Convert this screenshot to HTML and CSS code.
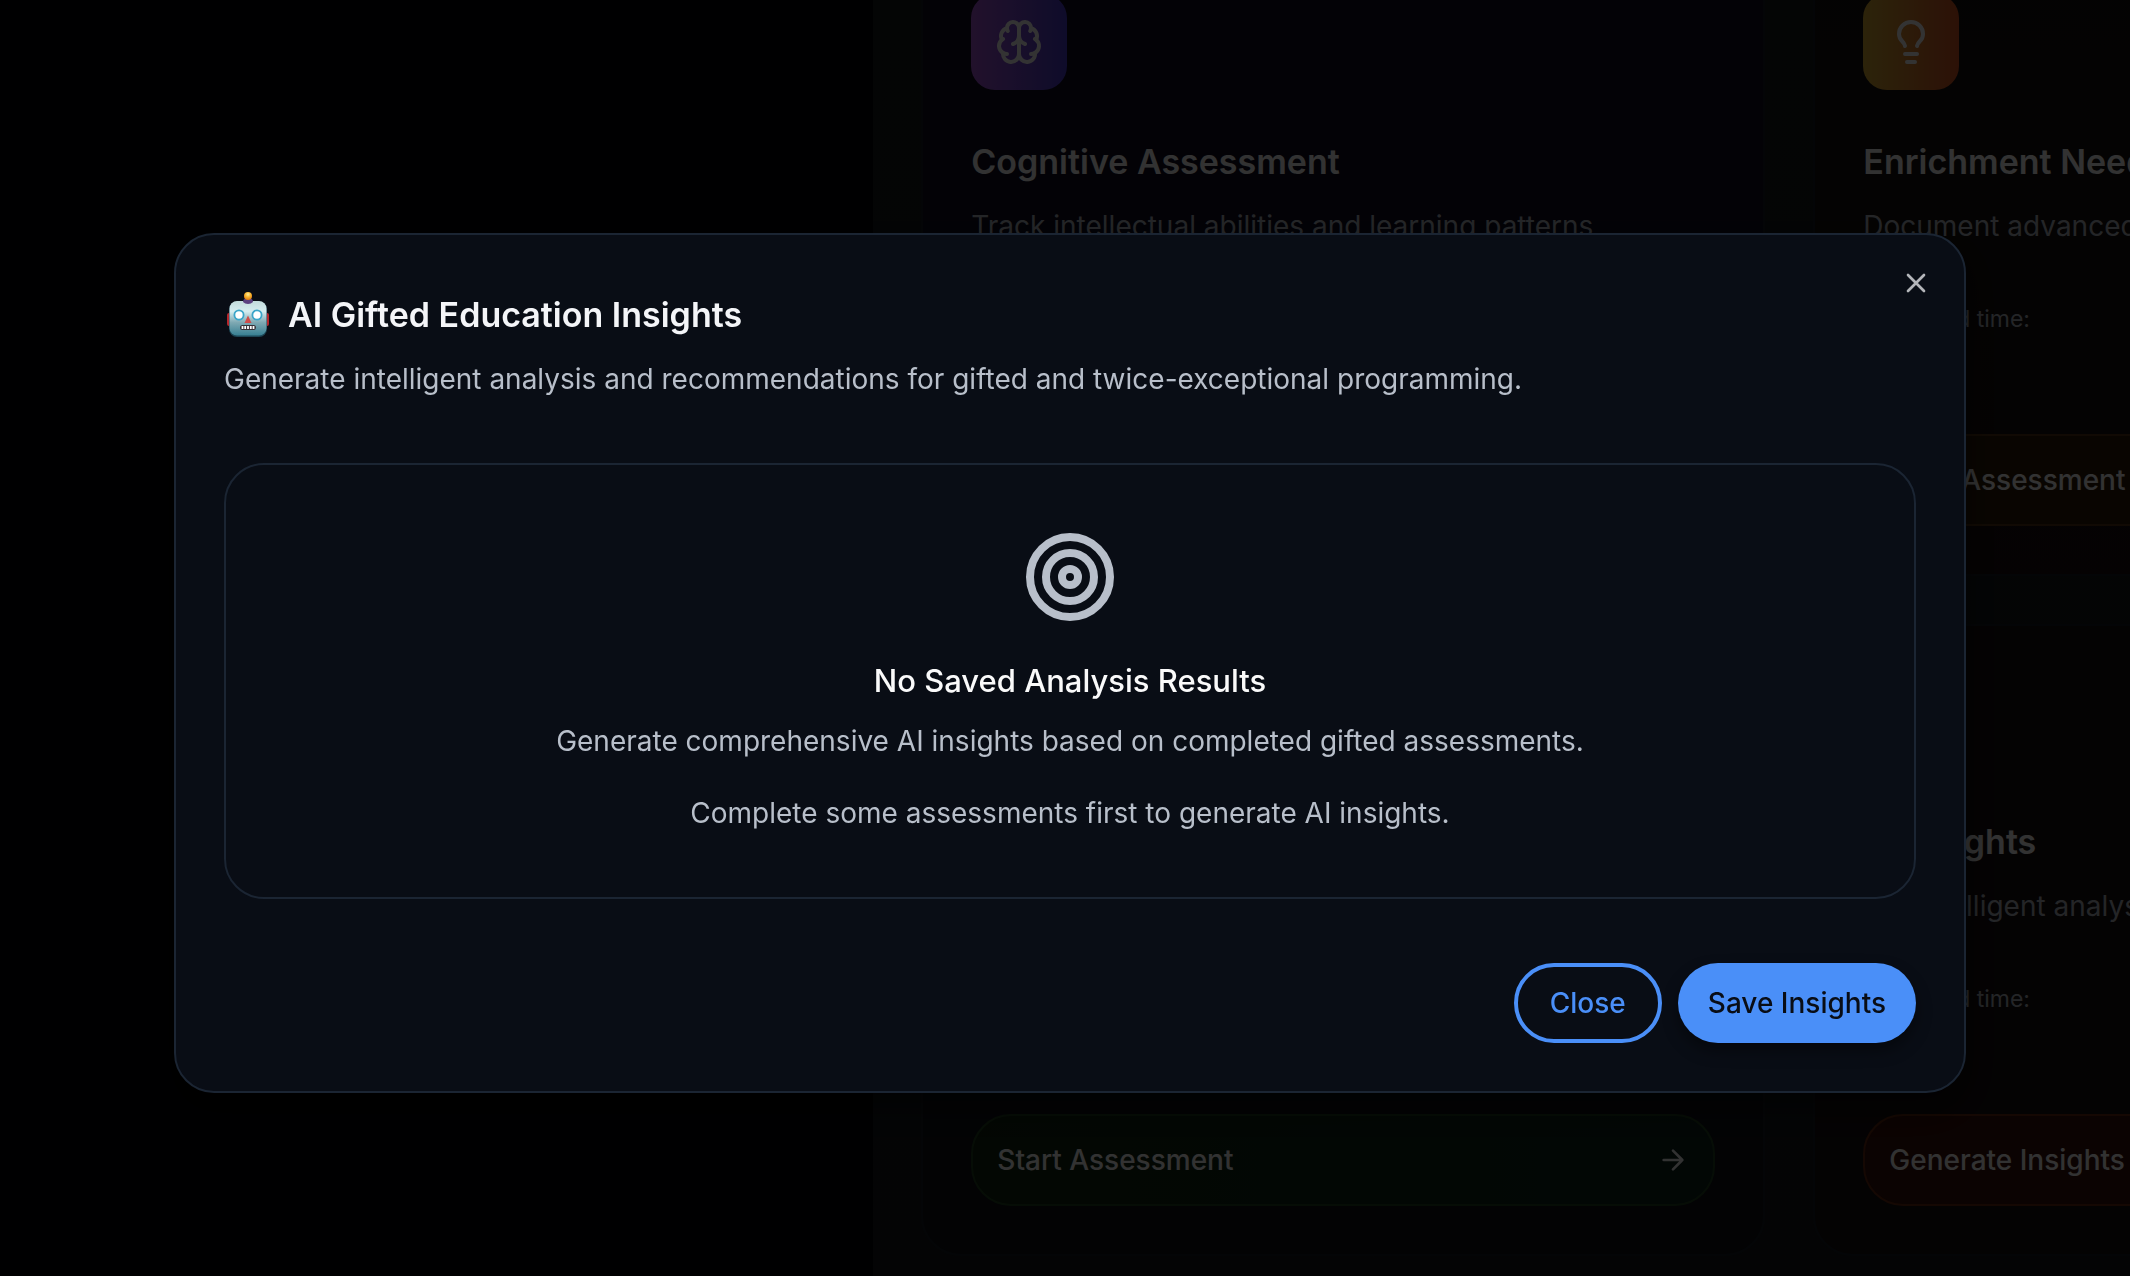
FILE: index.html
```html
<!DOCTYPE html>
<html lang="en">
<head>
<meta charset="utf-8">
<meta name="viewport" content="width=device-width, initial-scale=1">
<title>AI Gifted Education Insights</title>
<link rel="stylesheet" href="styles.css">
</head>
<body>
<div class="app">
  <aside class="sidebar"></aside>
  <main class="content">
    <div class="cards">
      <article class="card card-violet">
        <div class="card-icon icon-violet">
          <svg viewBox="0 0 24 24" class="line-icon" aria-hidden="true"><path d="M12 5a3 3 0 1 0-5.997.125 4 4 0 0 0-2.526 5.77 4 4 0 0 0 .556 6.588A4 4 0 1 0 12 18Z"/><path d="M12 5a3 3 0 1 1 5.997.125 4 4 0 0 1 2.526 5.77 4 4 0 0 1-.556 6.588A4 4 0 1 1 12 18Z"/><path d="M15 13a4.5 4.5 0 0 1-3-4 4.5 4.5 0 0 1-3 4"/><path d="M17.599 6.5a3 3 0 0 0 .399-1.375"/><path d="M6.003 5.125A3 3 0 0 0 6.401 6.5"/><path d="M3.477 10.896a4 4 0 0 1 .585-.396"/><path d="M19.938 10.5a4 4 0 0 1 .585.396"/><path d="M6 18a4 4 0 0 1-1.967-.516"/><path d="M19.967 17.484A4 4 0 0 1 18 18"/></svg>
        </div>
        <h3 class="card-title">Cognitive Assessment</h3>
        <p class="card-text">Track intellectual abilities and learning patterns</p>
      </article>
      <article class="card card-amber">
        <div class="card-icon icon-amber">
          <svg viewBox="0 0 24 24" class="line-icon" aria-hidden="true"><path d="M15 14c.2-1 .7-1.700 1.500-2.500 1-.9 1.500-2.200 1.500-3.500A6 6 0 0 0 6 8c0 1 .2 2.200 1.500 3.500.7.7 1.300 1.500 1.500 2.500"/><path d="M9 18h6M10 22h4"/></svg>
        </div>
        <h3 class="card-title">Enrichment Needs</h3>
        <p class="card-text">Document advanced learning needs</p>
        <p class="card-time">Estimated time:</p>
        <button class="card-action action-amber" type="button">Start Assessment
          <svg viewBox="0 0 24 24" class="arrow" aria-hidden="true"><path d="M5 12h14M12 5l7 7-7 7"/></svg></button>
      </article>
      <article class="card card-slate">
        <button class="card-action action-green" type="button">Start Assessment
          <svg viewBox="0 0 24 24" class="arrow" aria-hidden="true"><path d="M5 12h14M12 5l7 7-7 7"/></svg></button>
      </article>
      <article class="card card-red">
        <div class="card-icon icon-red"></div>
        <h3 class="card-title">AI Insights</h3>
        <p class="card-text">Get intelligent analysis</p>
        <p class="card-time">Estimated time:</p>
        <button class="card-action action-red" type="button">Generate Insights
          <svg viewBox="0 0 24 24" class="arrow" aria-hidden="true"><path d="M5 12h14M12 5l7 7-7 7"/></svg></button>
      </article>
    </div>
  </main>
</div>

<div class="overlay">
  <section class="dialog" role="dialog" aria-modal="true" aria-labelledby="dialog-title">
    <button class="dismiss" type="button" aria-label="Dismiss">
      <svg viewBox="0 0 24 24" aria-hidden="true"><path d="M18 6 6 18M6 6l12 12"/></svg>
    </button>
    <header class="dialog-header">
      <h2 class="dialog-title" id="dialog-title">
        <svg class="robot" viewBox="0 0 46 46" role="img" aria-label="Robot">
          <defs>
            <linearGradient id="face" x1="0" y1="0" x2="0" y2="1"><stop offset="0" stop-color="#c3dcdc"/><stop offset=".3" stop-color="#d5edf0"/><stop offset=".62" stop-color="#7fa9b3"/><stop offset="1" stop-color="#377f92"/></linearGradient>
            <radialGradient id="bulb" cx=".5" cy=".3" r=".7"><stop offset="0" stop-color="#fff09a"/><stop offset=".5" stop-color="#f9b32d"/><stop offset="1" stop-color="#d97813"/></radialGradient>
          </defs>
          <rect x="2" y="21" width="5" height="13" rx="2" fill="#b3262c"/><rect x="39" y="21" width="5" height="13" rx="2" fill="#b3262c"/>
          <rect x="4" y="9.500" width="38" height="35.500" rx="8" fill="#1d4656"/>
          <rect x="4.500" y="9" width="37" height="34.500" rx="7.500" fill="url(#face)"/>
          <path d="M18 10q0-4 5-4t5 4q-2 2-5 2t-5-2Z" fill="#5b4180"/>
          <circle cx="23" cy="4" r="4" fill="url(#bulb)"/>
          <circle cx="14" cy="23" r="4.600" fill="#fff" stroke="#3aa5c9" stroke-width="1.800"/>
          <circle cx="32" cy="23" r="4.600" fill="#fff" stroke="#3aa5c9" stroke-width="1.800"/>
          <path d="M23 23.500l3.500 7.500h-7Z" fill="#cf4b48"/>
          <rect x="15" y="33" width="16" height="5" rx="2.500" fill="#352f35"/>
          <path d="M17.500 34v3M20.200 34v3M23 34v3M25.800 34v3M28.500 34v3" stroke="#fff" stroke-width="1.800" stroke-linecap="butt"/>
        </svg>
        <span>AI Gifted Education Insights</span>
      </h2>
      <p class="dialog-text">Generate intelligent analysis and recommendations for gifted and twice-exceptional programming.</p>
    </header>
    <div class="empty">
      <svg class="target" viewBox="0 0 24 24" aria-hidden="true"><circle cx="12" cy="12" r="10"/><circle cx="12" cy="12" r="6"/><circle cx="12" cy="12" r="2"/></svg>
      <h3 class="empty-title">No Saved Analysis Results</h3>
      <p class="empty-text">Generate comprehensive AI insights based on completed gifted assessments.</p>
      <p class="empty-text">Complete some assessments first to generate AI insights.</p>
    </div>
    <footer class="dialog-footer">
      <button class="btn btn-outline" type="button">Close</button>
      <button class="btn btn-primary" type="button">Save Insights</button>
    </footer>
  </section>
</div>
</body>
</html>
```
FILE: styles.css
```css
* { box-sizing: border-box; margin: 0; }

body {
  background: #000;
  color: #fafafa;
  font-family: Inter, "Liberation Sans", sans-serif;
  font-size: 28px;
  line-height: 40px;
  overflow: hidden;
}

button { font: inherit; color: inherit; cursor: pointer; }
svg { flex: none; fill: none; stroke-linecap: round; stroke-linejoin: round; }

/* Page behind the dialog */
.app {
  display: grid;
  grid-template-columns: 41fr 59fr;
  height: 100vh;
}

.sidebar { background: #030406; }

.content {
  display: flex;
  flex-direction: column;
  justify-content: flex-end;
  min-width: 0;
  overflow: hidden;
  padding: 0 48px 20px;
  background: linear-gradient(#14191b, #14181d);
}

.cards {
  display: grid;
  grid-template-columns: repeat(2, 844px);
  gap: 48px;
}

.card {
  display: flex;
  flex-direction: column;
  align-items: flex-start;
  height: 632px;
  padding: 48px;
  border: 2px solid #181d24;
  border-radius: 40px;
}

.card-violet { background: #0f0c20; }
.card-amber { background: linear-gradient(#13130f, #190e0f); }
.card-slate { background: #0f1118; }
.card-red { background: #170f10; }

.card-icon {
  display: flex;
  align-items: center;
  justify-content: center;
  width: 96px;
  height: 96px;
  border-radius: 24px;
}

.icon-violet { background: linear-gradient(90deg, #a855d7, #4a3cd0); }
.icon-amber { background: linear-gradient(90deg, #dcb035, #dc5525); }
.icon-red { background: linear-gradient(90deg, #ef4444, #ea580c); }

.line-icon { width: 48px; height: 48px; stroke: #fff; stroke-width: 2; }

.card-title {
  margin-top: 48px;
  font-size: 34px;
  line-height: 48px;
  font-weight: 600;
}

.card-text { margin-top: 20px; color: #b4bac4; }

.card-time {
  margin-top: 56px;
  font-size: 23px;
  line-height: 34px;
  color: #b4bac4;
}

.card-action {
  display: flex;
  align-items: center;
  justify-content: space-between;
  width: 100%;
  height: 92px;
  margin-top: auto;
  padding: 0 24px;
  border: 2px solid;
  border-radius: 40px;
  font-weight: 500;
}

.action-amber { background: #2f1c08; border-color: #573515; }
.action-green { background: linear-gradient(90deg, #10230f, #0b231c); border-color: #224420; }
.action-red { background: #390f0a; border-color: #6a2a10; }

.arrow { width: 32px; height: 32px; stroke: currentColor; stroke-width: 2; }

/* Dialog */
.overlay {
  position: fixed;
  inset: 0;
  display: flex;
  align-items: center;
  justify-content: center;
  padding: 50px 0 0 10px;
  background: rgba(0, 0, 0, .8);
}

.dialog {
  position: relative;
  display: flex;
  flex-direction: column;
  gap: 64px;
  width: 100%;
  max-width: 1792px;
  padding: 48px;
  border: 2px solid #1b2533;
  border-radius: 40px;
  background: #090d15;
  box-shadow: 0 16px 32px rgba(0, 0, 0, .5);
}

.dismiss {
  position: absolute;
  top: 32px;
  right: 32px;
  display: flex;
  padding: 0;
  border: 0;
  background: none;
  color: #b4b6ba;
}

.dismiss svg { width: 32px; height: 32px; stroke: currentColor; stroke-width: 2; }

.dialog-title {
  display: flex;
  align-items: center;
  gap: 16px;
  font-size: 34px;
  line-height: 64px;
  font-weight: 600;
  color: #f4f5f8;
}

.robot { width: 48px; height: 48px; padding: 1px; }

.dialog-text { margin-top: 12px; color: #b8bfca; }

.empty {
  display: flex;
  flex-direction: column;
  align-items: center;
  padding: 64px 48px;
  border: 2px solid #1b2533;
  border-radius: 40px;
  text-align: center;
}

.target { width: 96px; height: 96px; stroke: #b8bfca; stroke-width: 2; }

.empty-title {
  margin-top: 32px;
  font-size: 31px;
  line-height: 48px;
  font-weight: 500;
}

.empty-text { margin-top: 16px; color: #b8bfca; }
.empty-text + .empty-text { margin-top: 32px; }

.dialog-footer {
  display: flex;
  justify-content: flex-end;
  gap: 16px;
}

.btn {
  height: 80px;
  border: 0;
  border-radius: 40px;
  font-weight: 500;
}

.btn-outline { padding: 0 32px; border: 4px solid #4a8ff8; background: none; color: #4a8ff8; }
.btn-primary { padding: 0 30px; background: #4a8ff8; color: #090d15; box-shadow: 0 8px 16px rgba(0, 0, 0, .4); }
```
